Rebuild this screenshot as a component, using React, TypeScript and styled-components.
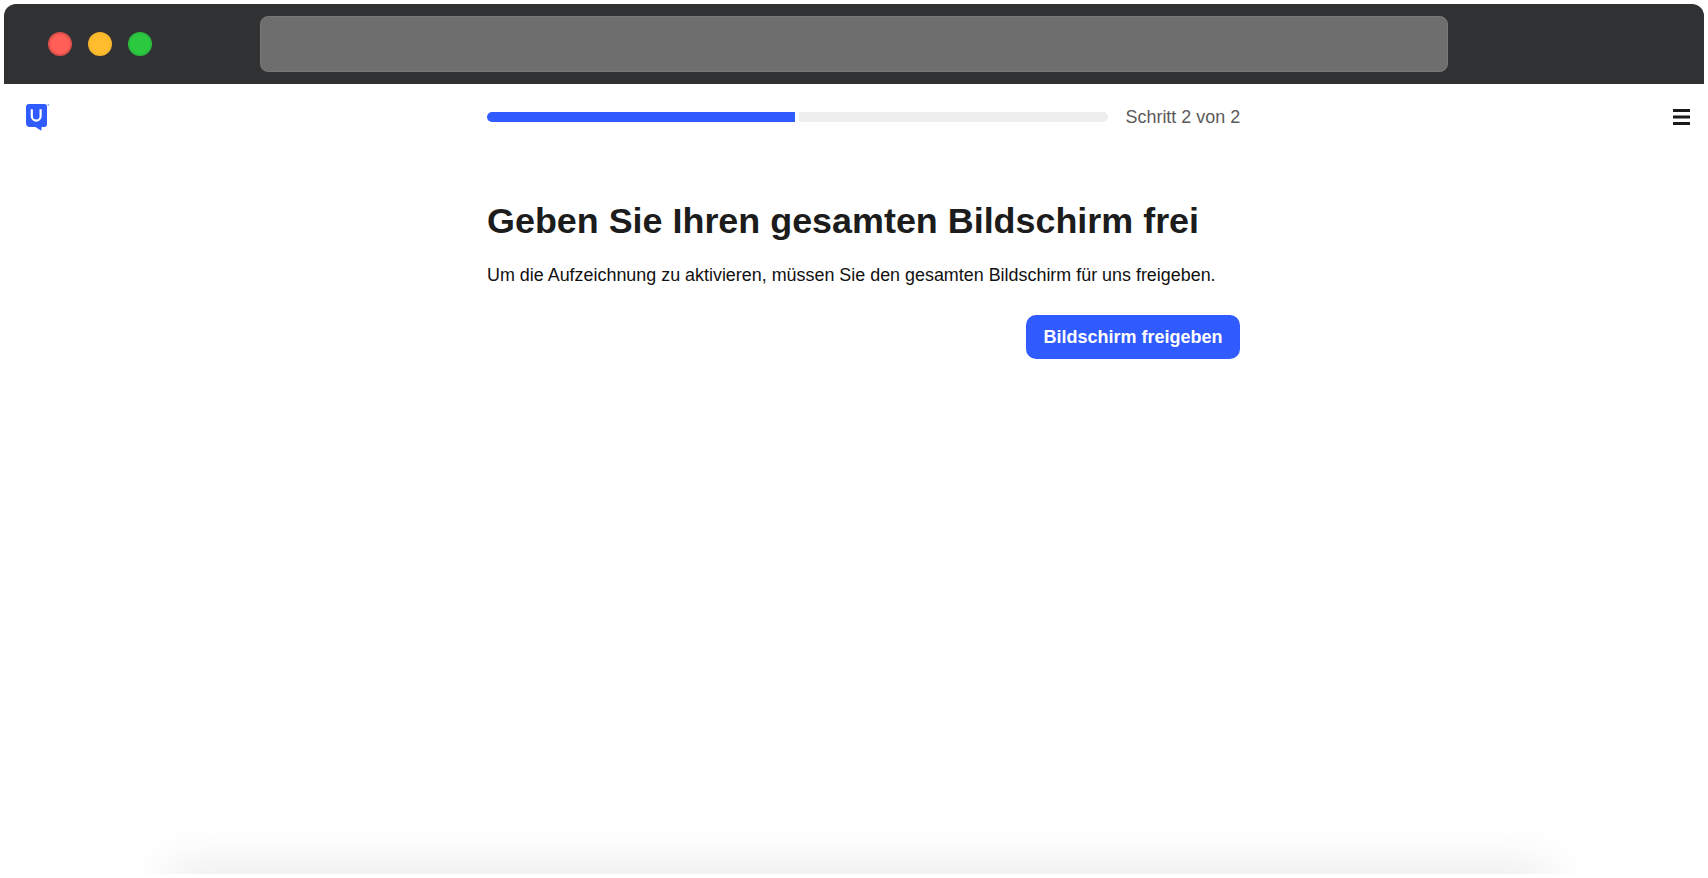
import React from "react";
import styled, { createGlobalStyle } from "styled-components";

const Global = createGlobalStyle`
  html, body { margin: 0; padding: 0; height: 100%; background: #fff; }
  body { font-family: "Liberation Sans", Arial, sans-serif; }
  #root { height: 100%; }
`;

const Screen = styled.div`
  box-sizing: border-box;
  height: 878px;
  padding: 4px;
  display: flex;
  flex-direction: column;
  overflow: hidden;
`;

const WindowBar = styled.div`
  flex: none;
  height: 80px;
  background: #303133;
  border-radius: 12px 12px 0 0;
  display: flex;
  align-items: center;
`;

const Lights = styled.div`
  display: flex;
  gap: 16px;
  margin-left: 44px;
  width: 212px;
`;

const Light = styled.span<{ $fill: string; $edge: string }>`
  box-sizing: border-box;
  width: 24px;
  height: 24px;
  border-radius: 50%;
  background: ${(p) => p.$fill};
  border: 2px solid ${(p) => p.$edge};
`;

const AddressBar = styled.div`
  box-sizing: border-box;
  width: 1188px;
  height: 56px;
  border-radius: 8px;
  background: #6e6e6e;
  border: 1px solid #777777;
`;

const Main = styled.main`
  flex: 1;
  position: relative;
  overflow: hidden;
  background: #fff;

  &::after {
    content: "";
    position: absolute;
    left: 164px;
    right: 154px;
    bottom: -20px;
    height: 20px;
    box-shadow: 0 0 50px rgba(0, 0, 0, 0.17);
  }
`;

const Columns = styled.div`
  display: grid;
  grid-template-columns: 483px 753px 1fr;
`;

const Header = styled(Columns)`
  height: 66px;
  align-items: center;
`;

const LogoSlot = styled.div`
  padding: 0 0 0 22px;
  height: 27px;
  margin-top: 1px;
`;

const Progress = styled.div`
  display: flex;
  align-items: center;
`;

const Track = styled.div`
  flex: none;
  display: flex;
  gap: 4px;
  width: 621px;
  height: 10px;
  border-radius: 5px;
  overflow: hidden;
`;

const Segment = styled.div<{ $on?: boolean }>`
  flex: ${(p) => (p.$on ? "0 0 308px" : "1")};
  background: ${(p) => (p.$on ? "#2f5bff" : "#eeeeee")};
`;

const StepLabel = styled.span`
  margin-left: 17.500px;
  font-size: 17.950px;
  line-height: 20px;
  color: #5a5a5a;
  white-space: nowrap;
`;

const MenuSlot = styled.div`
  display: flex;
  justify-content: flex-end;
  padding-right: 14px;
`;

const Body = styled.section`
  grid-column: 2;
  display: flex;
  flex-direction: column;
  padding-top: 49px;
`;

const Title = styled.h1`
  margin: 0;
  font-size: 35.900px;
  line-height: 44px;
  font-weight: 700;
  color: #1c1c1c;
  white-space: nowrap;
`;

const Lead = styled.p`
  margin: 19px 0 0;
  font-size: 17.920px;
  line-height: 26px;
  color: #111;
  white-space: nowrap;
`;

const Action = styled.button`
  align-self: flex-end;
  margin-top: 27px;
  width: 214px;
  height: 44px;
  padding: 0;
  border: 0;
  border-radius: 10px;
  background: #2f5bff;
  color: #fff;
  font-family: inherit;
  font-size: 18px;
  font-weight: 700;
`;

const Logo = () => (
  <svg width="25" height="27" viewBox="0 0 25 27">
    <path
      d="M3 0h15.500a2.500 2.500 0 0 1 2.500 2.500V20a3 3 0 0 1-3 3h-2.300l-.500 3.700-5.700-3.700H4a4 4 0 0 1-4-4V3a3 3 0 0 1 3-3z"
      fill="#2f5bff"
    />
    <path d="M5.800 5.300v6.900a4.400 4.400 0 0 0 8.800 0V5.300" fill="none" stroke="#fff" strokeWidth="2.200" />
    <circle cx="22.300" cy="1" r="0.900" fill="#8ea6ff" />
  </svg>
);

const Menu = () => (
  <svg width="17" height="16" viewBox="0 0 17 16">
    <path d="M0 1.500h17M0 8h17M0 14.500h17" stroke="#1a1a1a" strokeWidth="3" />
  </svg>
);

export default function App() {
  return (
    <Screen>
      <Global />
      <WindowBar>
        <Lights>
          <Light $fill="#ff5f57" $edge="#e0504a" />
          <Light $fill="#ffbd2e" $edge="#f5b52c" />
          <Light $fill="#2bc840" $edge="#2abd3d" />
        </Lights>
        <AddressBar />
      </WindowBar>
      <Main>
        <Header>
          <LogoSlot>
            <Logo />
          </LogoSlot>
          <Progress>
            <Track>
              <Segment $on />
              <Segment />
            </Track>
            <StepLabel>Schritt 2 von 2</StepLabel>
          </Progress>
          <MenuSlot>
            <Menu />
          </MenuSlot>
        </Header>
        <Columns>
          <Body>
            <Title>Geben Sie Ihren gesamten Bildschirm frei</Title>
            <Lead>Um die Aufzeichnung zu aktivieren, müssen Sie den gesamten Bildschirm für uns freigeben.</Lead>
            <Action>Bildschirm freigeben</Action>
          </Body>
        </Columns>
      </Main>
    </Screen>
  );
}
